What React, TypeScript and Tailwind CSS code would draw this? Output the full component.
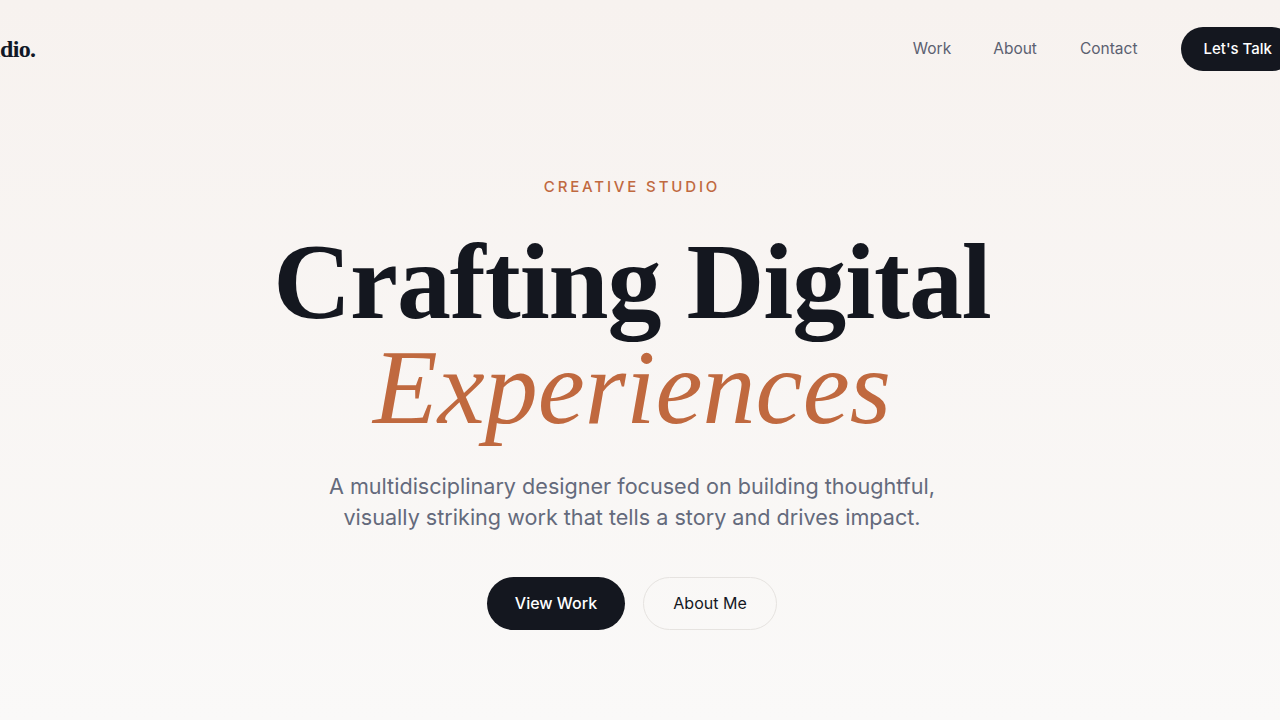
import React from 'react';

const sans = { fontFamily: 'Inter, "Open Sans", sans-serif' };
const serif = { fontFamily: '"Liberation Serif", "DejaVu Serif", serif' };

function Header() {
  return (
    <header className="flex items-center justify-between h-[98px] -ml-[33px] -mr-[14px]" style={sans}>
      <div className="text-[24px] font-semibold text-[#111827] tracking-tight" style={serif}>
        Studio.
      </div>
      <nav className="flex items-center">
        <a className="text-[15.5px] text-[#5b6070] mr-[42px]">Work</a>
        <a className="text-[15.5px] text-[#5b6070] mr-[43px]">About</a>
        <a className="text-[15.5px] text-[#5b6070] mr-[44px]">Contact</a>
        <button className="h-[44px] px-[22px] rounded-full bg-[#14171f] text-white text-[15px] font-medium">
          Let's Talk
        </button>
      </nav>
    </header>
  );
}

export default function App() {
  return (
    <div className="min-h-[720px] w-full overflow-hidden bg-gradient-to-b from-[#f7f2ef] to-[#faf9f8]">
      <Header />
      <main className="flex flex-col items-center text-center pt-[78px] pr-[16px]">
        <p className="text-[15px] tracking-[0.19em] text-[#c0693f] font-medium" style={sans}>
          CREATIVE STUDIO
        </p>
        <h1 className="mt-[30px] leading-[106px] text-[#14171f]" style={serif}>
          <span className="block text-[108px] font-bold tracking-[-0.01em]">Crafting Digital</span>
          <span className="block text-[106px] italic text-[#c0693f]">Experiences</span>
        </h1>
        <p className="mt-[30px] text-[21.6px] leading-[31px] text-[#646a7c] max-w-[620px]" style={sans}>
          A multidisciplinary designer focused on building thoughtful, visually striking work that tells a story and drives impact.
        </p>
        <div className="flex gap-[18px] mt-[44px]" style={sans}>
          <button className="h-[53px] w-[138px] rounded-full bg-[#14171f] text-white text-[16px] font-medium">
            View Work
          </button>
          <button className="h-[53px] w-[134px] rounded-full border border-[#e6e3e0] text-[#14171f] text-[16px]">
            About Me
          </button>
        </div>
      </main>
    </div>
  );
}
